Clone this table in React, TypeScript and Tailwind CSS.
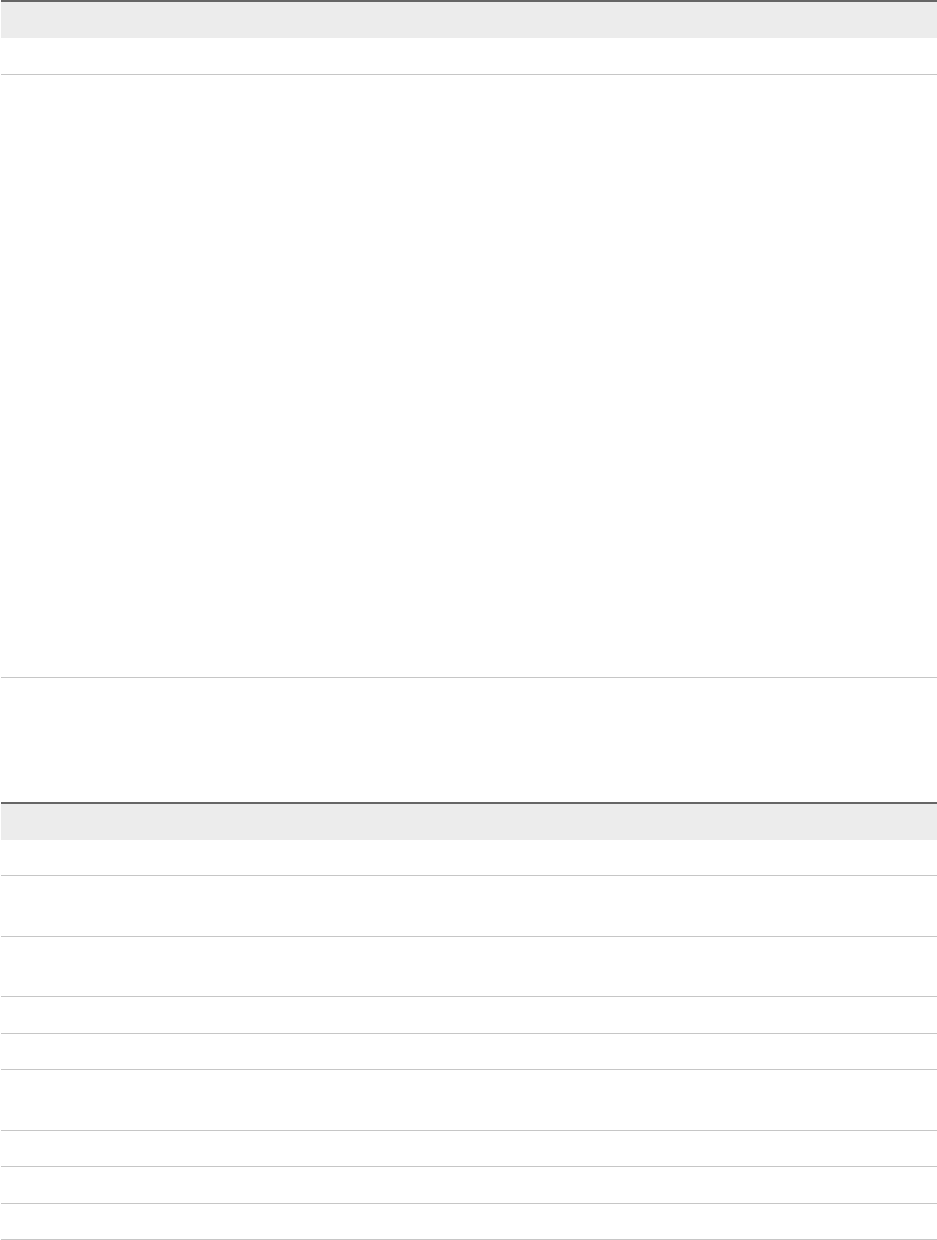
import React from 'react';

// empty doc tables: heights of each body row (px, border included)
const firstRows = [37, 603];
const secondRows = [36, 61, 60, 37, 36, 61, 36, 37, 36];

const Table = ({ rows }: { rows: number[] }) => (
  <div className="w-full border-t-2 border-[#666666]">
    <div className="h-[36px] bg-[#ececec]" />
    {rows.map((h, i) => (
      <div key={i} className="border-b border-[#c6c6c6]" style={{ height: h }} />
    ))}
  </div>
);

export default function App() {
  return (
    <div className="w-[937px] min-h-[1240px] bg-white pl-px font-['Liberation_Sans',sans-serif]">
      <Table rows={firstRows} />
      <div className="h-[124px]" />
      <Table rows={secondRows} />
    </div>
  );
}
